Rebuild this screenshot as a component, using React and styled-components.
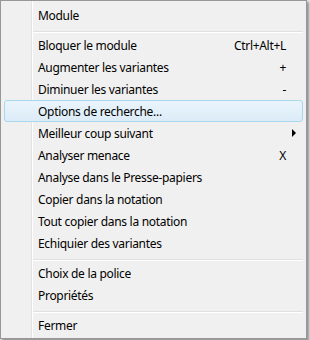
import React from "react";
import styled, { createGlobalStyle } from "styled-components";

const Global = createGlobalStyle`
  html, body { margin: 0; padding: 0; }
  body {
    background: #e6e6e6;
    width: 310px;
    height: 340px;
    overflow: hidden;
  }
`;

const Menu = styled.div`
  box-sizing: border-box;
  width: 307px;
  height: 339px;
  border: 1px solid #979797;
  padding: 3px 3px 2px 3px;
  background-color: #f0f0f0;
  background-image: linear-gradient(
    to right,
    transparent 30px,
    #e2e3e3 30px,
    #e2e3e3 31px,
    #ffffff 31px,
    #ffffff 32px,
    transparent 32px
  );
  box-shadow: 2px 2px 2px rgba(0, 0, 0, 0.35);
  display: flex;
  flex-direction: column;
  font-family: "Noto Sans", "Open Sans", sans-serif;
  font-size: 12px;
  letter-spacing: -0.3px;
  color: #000;
`;

const Item = styled.div`
  box-sizing: border-box;
  height: 22px;
  display: flex;
  align-items: center;
  padding: 0 16px 0 33px;
  border: 1px solid ${(p) => (p.$active ? "#a8d8eb" : "transparent")};
  border-radius: 3px;
  background: ${(p) =>
    p.$active ? "linear-gradient(to bottom, #eaf4fb, #dcecf8)" : "transparent"};
  position: relative;
`;

const Label = styled.span`
  flex: 1;
  white-space: nowrap;
`;

const Shortcut = styled.span`
  white-space: nowrap;
`;

const Arrow = styled.span`
  position: absolute;
  right: 6px;
  top: 6px;
  width: 0;
  height: 0;
  border-top: 4px solid transparent;
  border-bottom: 4px solid transparent;
  border-left: 4px solid #000;
`;

const Separator = styled.div`
  height: 8px;
  margin-left: 29px;
  display: flex;
  flex-direction: column;
  padding-top: 5px;
  box-sizing: border-box;
  &::before {
    content: "";
    display: block;
    height: 1px;
    background: #e0e0e0;
  }
  &::after {
    content: "";
    display: block;
    height: 1px;
    background: #ffffff;
  }
`;

const entries = [
  { label: "Module" },
  { sep: true },
  { label: "Bloquer le module", shortcut: "Ctrl+Alt+L" },
  { label: "Augmenter les variantes", shortcut: "+" },
  { label: "Diminuer les variantes", shortcut: "-" },
  { label: "Options de recherche...", active: true },
  { label: "Meilleur coup suivant", submenu: true },
  { label: "Analyser menace", shortcut: "X" },
  { label: "Analyse dans le Presse-papiers" },
  { label: "Copier dans la notation" },
  { label: "Tout copier dans la notation" },
  { label: "Echiquier des variantes" },
  { sep: true },
  { label: "Choix de la police" },
  { label: "Propriétés" },
  { sep: true },
  { label: "Fermer" },
];

export default function App() {
  return (
    <>
      <Global />
      <Menu>
        {entries.map((e, i) =>
          e.sep ? (
            <Separator key={i} />
          ) : (
            <Item key={i} $active={e.active}>
              <Label>{e.label}</Label>
              {e.shortcut && <Shortcut>{e.shortcut}</Shortcut>}
              {e.submenu && <Arrow />}
            </Item>
          )
        )}
      </Menu>
    </>
  );
}
